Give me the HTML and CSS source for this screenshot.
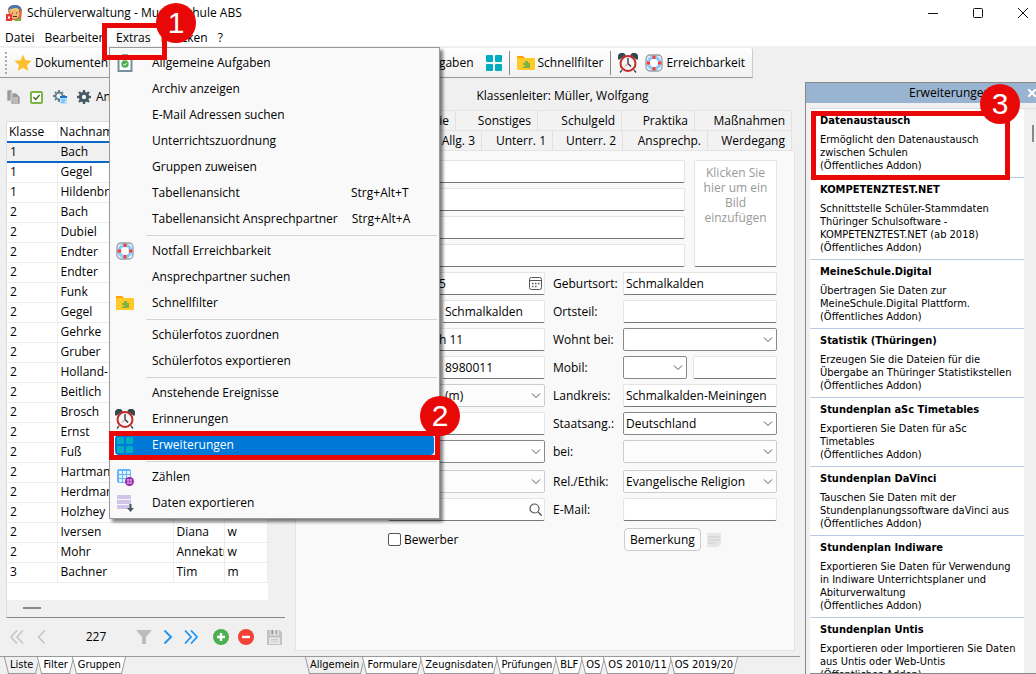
FILE: index.html
```html
<!DOCTYPE html>
<html lang="de">
<head>
<meta charset="utf-8">
<title>Schülerverwaltung</title>
<link rel="stylesheet" href="styles.css">
</head>
<body>
<svg class="defs" aria-hidden="true">
  <symbol id="i-star" viewBox="0 0 18 18"><path d="M9 .5l2.500 5.700 6.200.6-4.700 4.100 1.400 6.100L9 13.800 3.600 17 5 10.900.3 6.800l6.200-.6z" fill="#fcbf2e"/></symbol>
  <symbol id="i-grid" viewBox="0 0 16 16"><g fill="#00acc1"><rect width="7" height="7" rx="1"/><rect x="9" width="7" height="7" rx="1"/><rect y="9" width="7" height="7" rx="1"/><rect x="9" y="9" width="7" height="7" rx="1"/></g></symbol>
  <symbol id="i-folder" viewBox="0 0 18 14"><path d="M0 1q0-1 1-1h5l2 2h9v4H0z" fill="#ffa000"/><rect y="2" width="18" height="12" rx="1" fill="#ffca28"/><path d="M6 7h2V5h3v2h2v5H6v-1.500h2V9H6z" fill="#7cb342"/></symbol>
  <symbol id="i-clock" viewBox="0 0 20 20"><path d="M1 6a3.500 3.500 0 0 1 6-4zM19 6a3.500 3.500 0 0 0-6-4zM4 17l-2 2.500M16 17l2 2.500" fill="#37474f" stroke="#37474f" stroke-width="1.300"/><circle cx="10" cy="10.500" r="7.500" fill="#f5f5f5" stroke="#c62828" stroke-width="2"/><path d="M10 5v5.500l3 3" fill="none" stroke="#263238" stroke-width="1.300"/><path d="M10 10.500l-3 3" stroke="#ef5350"/></symbol>
  <symbol id="i-buoy" viewBox="0 0 18 18"><rect x="1" y="1" width="16" height="16" rx="4" fill="#f4f6f7" stroke="#8fa3ae" stroke-width="1.300"/><circle cx="9" cy="9" r="5.700" fill="#fff" stroke="#90caf9" stroke-width="3.600"/><path d="M9 1.500v3.500M9 13v3.500M1.500 9H5M13 9h3.500" stroke="#f44336" stroke-width="3"/></symbol>
  <symbol id="i-task" viewBox="0 0 16 18"><rect x="1.500" y="2.500" width="13" height="14.500" fill="#fff" stroke="#78909c" stroke-width="2"/><rect x="5" y="0" width="6" height="4" fill="#90a4ae"/><circle cx="8" cy="10" r="3.700" fill="#4caf50"/><path d="M6.300 10l1.300 1.300 2.300-2.500" fill="none" stroke="#fff"/></symbol>
  <symbol id="i-count" viewBox="0 0 17 17"><rect width="14" height="14" rx="2" fill="#64b5f6"/><path d="M2 2h3v3H2zM6 2h3v3H6zM10 2h3v3h-3zM2 6h3v3H2zM6 6h3v3H6zM10 6h3v3h-3zM2 10h3v3H2zM6 10h3v3H6z" fill="#e3f2fd"/><circle cx="12.500" cy="12.500" r="4.500" fill="#9c27b0"/><path d="M11 10v5M14 10v5M10 11h5M10 14h5" stroke="#e1bee7" stroke-width=".8"/></symbol>
  <symbol id="i-export" viewBox="0 0 17 17"><path d="M0 0h14v4H0zM0 5h14v4H0zM0 10h14v4H0z" fill="#d1c4e9"/><path d="M14.500 9v4H17l-3.500 4-3.500-4h2.500V9z" fill="#455a64"/></symbol>
  <symbol id="i-copy" viewBox="0 0 14 14"><path d="M1 0h5v11H1zM5 3h5l4 4v7H5z" fill="#9a9a9a" stroke="#f0f0f0" stroke-width=".6"/><path d="M7 8h5M7 10h5M7 12h5" stroke="#ddd"/></symbol>
  <symbol id="i-check" viewBox="0 0 13 13"><rect x="1" y="1" width="11" height="11" rx="1" fill="#fff" stroke="#7cb342" stroke-width="2"/><path d="M3.500 6l2.300 2.500L9.500 4" fill="none" stroke="#33691e" stroke-width="1.400"/></symbol>
  <symbol id="i-gear" viewBox="0 0 14 14"><circle cx="7" cy="7" r="3.700" fill="none" stroke="#455a64" stroke-width="3"/><path d="M7 0v2.500M7 11.500V14M0 7h2.500M11.500 7H14M2 2l2 2M10 10l2 2M12 2l-2 2M4 10l-2 2" stroke="#455a64" stroke-width="2.400"/></symbol>
  <symbol id="i-gearlist" viewBox="0 0 14 14"><circle cx="6" cy="6" r="3.500" fill="none" stroke="#607d8b" stroke-width="1.800"/><path d="M6 0v2M6 10v2M0 6h2M10 6h2M2 2l1 1M2 10l1-1M10 2L9 3" stroke="#607d8b" stroke-width="1.800"/><rect x="7" y="6" width="7" height="8" fill="#bbdefb"/><path d="M7 7h7" stroke="#1976d2" stroke-width="2"/><path d="M8.500 10h4M8.500 12h3" stroke="#42a5f5"/></symbol>
</svg>
<div class="app">
  <header class="titlebar">
    <svg class="logo" viewBox="0 0 16 16"><path d="M2 5q0-5 7-5 6 0 7 5l-1 10H4z" fill="#d9633a"/><circle cx="8.500" cy="9" r="5" fill="#f3b37a"/><path d="M2 6q1-6 7-6t6 6l-6-2z" fill="#3d7ac0"/><path d="M3 5.500l7-2 3 2" fill="none" stroke="#ffd54f" stroke-width="1.600"/><path d="M6 8h1M10 8h1M7 11.500h4" stroke="#5d2f1a"/><path d="M9 15q3-3 6-1v2H8z" fill="#7cb342"/><rect y="9" width="6" height="7" fill="#e53935"/><path d="M3 11v3M2 12.500h2" stroke="#fff"/></svg>
    <h1>Schülerverwaltung - Musterschule ABS</h1>
    <div class="winbtns">
      <button aria-label="Minimieren"><svg viewBox="0 0 10 10"><path d="M0 5.500h10" stroke="#111"/></svg></button>
      <button aria-label="Maximieren"><svg viewBox="0 0 10 10"><rect x=".5" y=".5" width="9" height="9" rx="1" fill="none" stroke="#111"/></svg></button>
      <button aria-label="Schließen"><svg viewBox="0 0 10 10"><path d="M0 0l10 10M10 0L0 10" stroke="#111"/></svg></button>
    </div>
  </header>
  <nav class="menubar">
    <button>Datei</button><button>Bearbeiten</button><button class="open">Extras</button><button>Drucken</button><button>?</button>
  </nav>

  <div class="work">
    <div class="toolbar">
      <span class="grip"></span>
      <button><svg class="s18"><use href="#i-star"/></svg>Dokumentenbox</button>
      <button class="push">Aufgaben</button>
      <button aria-label="Erweiterungen"><svg class="s16"><use href="#i-grid"/></svg></button>
      <span class="tsep"></span>
      <button><svg class="folder"><use href="#i-folder"/></svg>Schnellfilter</button>
      <span class="tsep"></span>
      <button aria-label="Erinnerungen"><svg class="s20"><use href="#i-clock"/></svg></button>
      <button><svg class="s18"><use href="#i-buoy"/></svg>Erreichbarkeit</button>
    </div>
    <div class="columns">
      <section class="left">
        <div class="listtools">
          <button aria-label="Kopieren"><svg class="s14"><use href="#i-copy"/></svg></button>
          <button aria-label="Auswählen"><svg class="s13"><use href="#i-check"/></svg></button>
          <button aria-label="Liste einstellen"><svg class="s14"><use href="#i-gearlist"/></svg></button>
          <button><svg class="s14"><use href="#i-gear"/></svg>Ansicht</button>
        </div>
        <div class="listbox">
          <table>
            <colgroup><col class="c1"><col class="c2"><col class="c3"><col class="c4"></colgroup>
            <thead><tr><th>Klasse</th><th>Nachname</th><th></th><th></th></tr></thead>
            <tbody>
              <tr class="sel"><td>1</td><td>Bach</td><td></td><td></td></tr>
              <tr><td>1</td><td>Gegel</td><td></td><td></td></tr>
              <tr><td>1</td><td>Hildenbrand</td><td></td><td></td></tr>
              <tr><td>2</td><td>Bach</td><td></td><td></td></tr>
              <tr><td>2</td><td>Dubiel</td><td></td><td></td></tr>
              <tr><td>2</td><td>Endter</td><td></td><td></td></tr>
              <tr><td>2</td><td>Endter</td><td></td><td></td></tr>
              <tr><td>2</td><td>Funk</td><td></td><td></td></tr>
              <tr><td>2</td><td>Gegel</td><td></td><td></td></tr>
              <tr><td>2</td><td>Gehrke</td><td></td><td></td></tr>
              <tr><td>2</td><td>Gruber</td><td></td><td></td></tr>
              <tr><td>2</td><td>Holland-</td><td></td><td></td></tr>
              <tr><td>2</td><td>Beitlich</td><td></td><td></td></tr>
              <tr><td>2</td><td>Brosch</td><td></td><td></td></tr>
              <tr><td>2</td><td>Ernst</td><td></td><td></td></tr>
              <tr><td>2</td><td>Fuß</td><td></td><td></td></tr>
              <tr><td>2</td><td>Hartmann</td><td></td><td></td></tr>
              <tr><td>2</td><td>Herdmann</td><td></td><td></td></tr>
              <tr><td>2</td><td>Holzhey</td><td></td><td></td></tr>
              <tr><td>2</td><td>Iversen</td><td>Diana</td><td>w</td></tr>
              <tr><td>2</td><td>Mohr</td><td>Annekatrin</td><td>w</td></tr>
              <tr><td>3</td><td>Bachner</td><td>Tim</td><td>m</td></tr>
            </tbody>
          </table>
          <div class="hscroll"><span></span></div>
        </div>
        <div class="pager">
          <button aria-label="Anfang"><svg class="s14" viewBox="0 0 14 14"><path d="M7 .5L1 7l6 6.500M13 .5L7 7l6 6.500" fill="none" stroke="#c4c4c4" stroke-width="1.500"/></svg></button>
          <button aria-label="Zurück"><svg class="s14" viewBox="0 0 14 14"><path d="M11.500.5L5.500 7l6 6.500" fill="none" stroke="#c4c4c4" stroke-width="1.500"/></svg></button>
          <span class="count">227</span>
          <button aria-label="Filter"><svg class="s16" viewBox="0 0 16 16"><path d="M0 1h16L10 8v7H6V8z" fill="#bdbdbd"/></svg></button>
          <button aria-label="Weiter"><svg class="s14" viewBox="0 0 14 14"><path d="M3.500.5L10 7l-6.500 6.500" fill="none" stroke="#2196f3" stroke-width="2"/></svg></button>
          <button aria-label="Ende"><svg class="s14" viewBox="0 0 14 14"><path d="M1 .5L7 7l-6 6.500M7 .5L13 7l-6 6.500" fill="none" stroke="#2196f3" stroke-width="1.800"/></svg></button>
          <button aria-label="Hinzufügen" class="add"><svg class="s16" viewBox="0 0 16 16"><circle cx="8" cy="8" r="8" fill="#4caf50"/><path d="M8 4v8M4 8h8" stroke="#fff" stroke-width="2.400"/></svg></button>
          <button aria-label="Löschen"><svg class="s16" viewBox="0 0 16 16"><circle cx="8" cy="8" r="8" fill="#f44336"/><path d="M4 8h8" stroke="#fff" stroke-width="2.400"/></svg></button>
          <button aria-label="Speichern" class="save"><svg class="s14" viewBox="0 0 14 14"><path d="M0 0h12l2 2v12H0z" fill="#c2c2c2"/><path d="M3 0h8v5H3zM2 7h10v6H2z" fill="#e8e8e8"/><path d="M4 0h2v4H4zM8 0h1.500v4H8z" fill="#999"/><path d="M3.500 9h7M3.500 11h7" stroke="#ccc"/></svg></button>
        </div>
        <div class="btabs"><button class="on">Liste</button><button>Filter</button><button>Gruppen</button></div>
      </section>

      <section class="center">
        <p class="leader">Klassenleiter: Müller, Wolfgang</p>
        <div class="tabs row1"><button>Familie</button><button>Sonstiges</button><button>Schulgeld</button><button>Praktika</button><button>Maßnahmen</button></div>
        <div class="tabs row2"><button>Allg. 3</button><button>Unterr. 1</button><button>Unterr. 2</button><button>Ansprechp.</button><button>Werdegang</button></div>
        <form class="panel">
          <div class="top">
            <div class="stack">
              <input aria-label="Name"><input aria-label="Vorname"><input aria-label="Rufname"><input aria-label="Geburtsname">
            </div>
            <button type="button" class="photo">Klicken Sie hier um ein Bild einzufügen</button>
          </div>
          <div class="fields">
            <div class="withicon"><input class="inset" aria-label="Geburtsdatum" value="5"><svg class="s13" viewBox="0 0 13 13"><rect x=".5" y=".5" width="12" height="12" rx="2" fill="none" stroke="#555"/><path d="M.5 3.500h12" stroke="#555"/><path d="M3 6.500h1.500M6 6.500h1.500M9 6.500h1.500M3 9.500h1.500M6 9.500h1.500" stroke="#555" stroke-width="1.300"/></svg></div>
            <label for="f1">Geburtsort:</label><input id="f1" value="Schmalkalden">

            <div class="pair"><input aria-label="PLZ"><input aria-label="Ort" value="Schmalkalden"></div>
            <label for="f2">Ortsteil:</label><input id="f2">

            <input class="inset" aria-label="Straße" value="h 11">
            <label for="f3">Wohnt bei:</label><select id="f3"><option></option></select>

            <div class="pair"><input aria-label="Vorwahl"><input aria-label="Telefon" value="8980011"></div>
            <label for="f4">Mobil:</label><div class="mobil"><select id="f4"><option></option></select><input aria-label="Mobilnummer"></div>

            <select class="soft sex" aria-label="Geschlecht"><option>(m)</option></select>
            <label for="f5">Landkreis:</label><input id="f5" value="Schmalkalden-Meiningen">

            <input aria-label="Zusatz">
            <label for="f6">Staatsang.:</label><select id="f6"><option>Deutschland</option></select>

            <select aria-label="Wohnhaft"><option></option></select>
            <label for="f7">bei:</label><select id="f7" class="soft"><option></option></select>

            <select class="soft gap" aria-label="Status"><option></option></select>
            <label class="gap" for="f8">Rel./Ethik:</label><select id="f8" class="soft gap"><option>Evangelische Religion</option></select>

            <div class="withicon"><input aria-label="Suche"><svg class="s13" viewBox="0 0 13 13"><circle cx="5.500" cy="5.500" r="4.500" fill="none" stroke="#555" stroke-width="1.200"/><path d="M9 9l3.800 3.800" stroke="#555" stroke-width="1.300"/></svg></div>
            <label for="f9">E-Mail:</label><input id="f9">

            <label class="bew"><input type="checkbox">Bewerber</label>
            <div class="note"><button type="button">Bemerkung</button><svg class="s14" viewBox="0 0 14 14"><path d="M0 0h14v11l-3 3H0z" fill="#e6e6e6"/><path d="M1 4h12M1 7h12M1 10h7" stroke="#cfcfcf"/></svg></div>
          </div>
        </form>
        <div class="btabs"><button class="on">Allgemein</button><button>Formulare</button><button>Zeugnisdaten</button><button>Prüfungen</button><button>BLF</button><button>OS</button><button>OS 2010/11</button><button>OS 2019/20</button></div>
      </section>

      <aside class="ext">
        <div class="exthead"><h2>Erweiterungen</h2><button aria-label="Panel schließen"><svg viewBox="0 0 8 8"><path d="M0 0l8 8M8 0L0 8" stroke="#fff" stroke-width="2"/></svg></button></div>
        <div class="extbody">
          <ul>
            <li><h3>Datenaustausch</h3><p>Ermöglicht den Datenaustausch<br>zwischen Schulen<br>(Öffentliches Addon)</p></li>
            <li><h3>KOMPETENZTEST.NET</h3><p>Schnittstelle Schüler-Stammdaten<br>Thüringer Schulsoftware -<br>KOMPETENZTEST.NET (ab 2018)<br>(Öffentliches Addon)</p></li>
            <li><h3>MeineSchule.Digital</h3><p>Übertragen Sie Daten zur<br>MeineSchule.Digital Plattform.<br>(Öffentliches Addon)</p></li>
            <li><h3>Statistik (Thüringen)</h3><p>Erzeugen Sie die Dateien für die<br>Übergabe an Thüringer Statistikstellen<br>(Öffentliches Addon)</p></li>
            <li><h3>Stundenplan aSc Timetables</h3><p>Exportieren Sie Daten für aSc<br>Timetables<br>(Öffentliches Addon)</p></li>
            <li><h3>Stundenplan DaVinci</h3><p>Tauschen Sie Daten mit der<br>Stundenplanungssoftware daVinci aus<br>(Öffentliches Addon)</p></li>
            <li><h3>Stundenplan Indiware</h3><p>Exportieren Sie Daten für Verwendung<br>in Indiware Unterrichtsplaner und<br>Abiturverwaltung<br>(Öffentliches Addon)</p></li>
            <li><h3>Stundenplan Untis</h3><p>Exportieren oder Importieren Sie Daten<br>aus Untis oder Web-Untis<br>(Öffentliches Addon)</p></li>
          </ul>
          <div class="vscroll"><span></span></div>
        </div>
      </aside>
    </div>
  </div>

  <div class="menu" role="menu">
    <button><svg class="task"><use href="#i-task"/></svg><span>Allgemeine Aufgaben</span></button>
    <button><span>Archiv anzeigen</span></button>
    <button><span>E-Mail Adressen suchen</span></button>
    <button><span>Unterrichtszuordnung</span></button>
    <button><span>Gruppen zuweisen</span></button>
    <button><span>Tabellenansicht</span><kbd>Strg+Alt+T</kbd></button>
    <button><span>Tabellenansicht Ansprechpartner</span><kbd>Strg+Alt+A</kbd></button>
    <hr>
    <button><svg class="s18"><use href="#i-buoy"/></svg><span>Notfall Erreichbarkeit</span></button>
    <button><span>Ansprechpartner suchen</span></button>
    <button><svg class="folder"><use href="#i-folder"/></svg><span>Schnellfilter</span></button>
    <hr>
    <button><span>Schülerfotos zuordnen</span></button>
    <button><span>Schülerfotos exportieren</span></button>
    <hr>
    <button><span>Anstehende Ereignisse</span></button>
    <button><svg class="s20"><use href="#i-clock"/></svg><span>Erinnerungen</span></button>
    <button class="active"><svg class="s16"><use href="#i-grid"/></svg><span>Erweiterungen</span></button>
    <hr>
    <button><svg class="s17"><use href="#i-count"/></svg><span>Zählen</span></button>
    <button><svg class="s17"><use href="#i-export"/></svg><span>Daten exportieren</span></button>
  </div>

  <div class="frame f-extras"></div><div class="badge b-extras">1</div>
  <div class="frame f-item"></div><div class="badge b-item">2</div>
  <div class="frame f-addon"></div><div class="badge b-addon">3</div>
</div>
</body>
</html>
```
FILE: styles.css
```css
* { box-sizing: border-box; }
body { margin: 0; background: #f0f0f0; color: #000; font: 12px/16px "Open Sans", "Noto Sans", sans-serif; }
button, input, select, kbd { font: inherit; color: inherit; margin: 0; padding: 0; }
button { border: 0; background: none; text-align: left; white-space: nowrap; }
h1, h2, h3, p, ul { margin: 0; padding: 0; font: inherit; list-style: none; }
svg { display: block; flex: none; }
.defs { position: absolute; width: 0; height: 0; }
.s13 { width: 13px; height: 13px; }
.s14 { width: 14px; height: 14px; }
.s16 { width: 16px; height: 16px; }
.s17 { width: 17px; height: 17px; }
.s18 { width: 18px; height: 18px; }
.s20 { width: 20px; height: 20px; }
.folder { width: 18px; height: 14px; }
.task { width: 16px; height: 18px; }

.app { position: relative; height: 100vh; display: flex; flex-direction: column; overflow: hidden; }
.titlebar { background: #fff; height: 26px; display: flex; align-items: center; gap: 5px; padding-left: 6px; flex: none; }
.logo { width: 16px; height: 16px; }
.winbtns { margin-left: auto; display: flex; gap: 35px; padding-right: 8px; }
.winbtns svg { width: 10px; height: 10px; }
.menubar { background: #fff; height: 20px; display: flex; align-items: flex-end; flex: none; padding-left: 5px; gap: 10px; }
.menubar .open { background: #f4f4f4; }
.menubar button { height: 17px; }

.work { flex: 1; min-height: 0; display: flex; flex-direction: column; padding-top: 2px; }
.toolbar { align-self: flex-start; min-width: 753px; height: 30px; display: flex; align-items: center; padding: 0 7px 0 5px; gap: 7px; background: linear-gradient(#fff, #f1f1f1); border-bottom: 1px solid #999; border-right: 1px solid #ccc; flex: none; border-radius: 0 2px 0 0; }
.toolbar button { display: flex; align-items: center; gap: 3px; }
.toolbar .push { margin-left: auto; padding-right: 5px; }
.grip { width: 2px; height: 22px; background: repeating-linear-gradient(#aaa 0 2px, transparent 2px 4px); }
.tsep { width: 1px; height: 24px; background: #888; }

.columns { flex: 1; min-height: 0; display: flex; }
.left { width: 290px; flex: none; display: flex; flex-direction: column; }
.listtools { height: 43px; flex: none; display: flex; align-items: flex-start; gap: 10px; padding: 11px 0 0 6px; }
.listtools button { display: flex; align-items: center; gap: 5px; height: 16px; }
.listbox { margin: 0 5px 0 6px; border-left: 1px solid #ddd; border-top: 1px solid #ddd; border-bottom: 1px solid #888; flex: 1; min-height: 0; display: flex; flex-direction: column; padding-right: 17px; background: linear-gradient(#f0f0f0, #f0f0f0) bottom / 100% 17px no-repeat, linear-gradient(#f0f0f0, #f0f0f0) right / 17px 100% no-repeat, #fff; }
table { width: 100%; table-layout: fixed; border-collapse: collapse; background: #fff; }
.c1 { width: 50px; } .c2 { width: 116px; } .c3 { width: 51px; }
th, td { height: 20px; padding: 0 0 0 3px; text-align: left; font-weight: 400; overflow: hidden; white-space: nowrap; border-bottom: 1px solid #ececec; border-right: 1px solid #ececec; }
th { padding-left: 2px; }
.sel td { background: #f0f0f0; border-top: 2px solid #0a66c8; border-bottom: 2px solid #0a66c8; }
.hscroll { margin-top: auto; height: 17px; padding: 7px 0 0 16px; }
.hscroll span { display: block; width: 18px; height: 2px; background: #888; }
.pager { height: 38px; flex: none; display: flex; align-items: center; padding-left: 10px; gap: 9px; }
.count { width: 80px; text-align: center; }
.pager .count { margin-right: -9px; }
.pager .add { margin-left: 6px; }
.pager .save { margin-left: 4px; }
.pager .save svg { width: 15px; height: 15px; }

.btabs { height: 18px; flex: none; border-top: 1px solid #999; display: flex; font: 11px/16px "DejaVu Sans Condensed", "DejaVu Sans", sans-serif; padding-left: 5px; }
.center .btabs { padding-left: 16px; }
.btabs button { position: relative; z-index: 0; height: 16px; padding: 0 4px; }
.btabs button::before, .btabs button::after { content: ""; position: absolute; z-index: -1; top: 0; height: 16px; width: 50%; background: #fff; border-bottom: 1px solid #999; }
.btabs button::before { left: 1px; border-left: 1px solid #999; transform: skewX(14deg); }
.btabs button::after { right: 1px; border-right: 1px solid #999; transform: skewX(-14deg); }
.btabs .on::before, .btabs .on::after { background: #f0f0f0; }
.left .btabs button { padding: 0 5px; }

.center { flex: 1; min-width: 0; margin-right: 5px; display: flex; flex-direction: column; }
.leader { height: 32px; padding-top: 10px; text-align: center; padding-left: 35px; }
.tabs { display: grid; margin: 0 8px 0 5px; }
.row1 { grid-template-columns: 1fr 82px 84px 73px 97px; }
.row2 { grid-template-columns: 1fr 71px 70px 85px 84px; }
.tabs button { height: 20px; text-align: right; padding-right: 6px; border-right: 1px solid #e2e2e2; border-top: 1px solid #e4e4e4; background: #f2f2f2; }
.panel { flex: 1; min-height: 0; margin: 0 5px 5px; background: #f9f9f9; border: 1px solid #e4e4e4; padding: 9px 17px 0 92px; }
.top { display: flex; gap: 9px; margin-bottom: 5px; }
.stack { flex: 1; display: grid; gap: 5px; }
.panel input:not([type]), .panel select { width: 100%; min-width: 0; height: 23px; background: #fff; border: 1px solid #e4e4e4; border-bottom-color: #777; border-radius: 2px; padding: 0 2px; outline: 0; }
.panel select { appearance: none; border-color: #888; background: #fff url("data:image/svg+xml,%3Csvg xmlns='http://www.w3.org/2000/svg' width='10' height='6'%3E%3Cpath d='M1 .5l4 4 4-4' fill='none' stroke='%23555'/%3E%3C/svg%3E") no-repeat right 3px center; }
.panel select.soft { border-color: #ccc; background-color: #fcfcfc; }
.photo { width: 83px; background: #fff; border: 1px solid #e4e4e4; border-bottom-color: #777; border-radius: 2px; white-space: normal; text-align: center; color: #999; line-height: 15px; display: flex; padding: 4px 8px; }
.fields { display: grid; grid-template-columns: minmax(0, 1fr) 78px 154px; row-gap: 5px; align-items: center; }
.fields > label { padding-left: 8px; }
.withicon { position: relative; }
.withicon svg { position: absolute; right: 3px; top: 5px; }
.pair { display: grid; grid-template-columns: 48px minmax(0, 1fr); gap: 6px; }
.mobil { display: grid; grid-template-columns: 64px minmax(0, 1fr); gap: 6px; }
.panel input.inset { padding-left: 50px; }
.panel select.sex { padding-left: 56px; }
.gap { margin-top: 2px; }
.fields > .bew { padding: 2px 0 0; grid-column: 1 / 3; display: flex; align-items: center; gap: 3px; }
.bew input { appearance: none; width: 13px; height: 13px; border: 1px solid #555; border-radius: 2px; background: #fff; }
.note { display: flex; align-items: center; gap: 6px; padding: 2px 0 0 1px; }
.note button { height: 23px; padding: 0 5px; border: 1px solid #ccc; border-radius: 4px; background: #fdfdfd; }

.ext { width: 231px; flex: none; margin-top: 4px; border-left: 1px solid #888; border-top: 1px solid #888; display: flex; flex-direction: column; }
.exthead { height: 20px; flex: none; background: #99b4d1; display: flex; align-items: center; }
.exthead h2 { flex: 1; text-align: center; padding-left: 66px; }
.exthead svg { width: 8px; height: 8px; }
.extbody { flex: 1; min-height: 0; display: flex; margin: 5px 0 0 4px; border-top: 1px solid #ddd; border-bottom: 1px solid #888; font: 11px/13px "DejaVu Sans Condensed", "DejaVu Sans", sans-serif; }
.extbody ul { flex: 1; background: #fff; overflow: hidden; }
.extbody li { padding: 4px 2px 5px 10px; border-bottom: 1px solid #b5cce4; white-space: nowrap; }
.extbody h3 { font-weight: 700; line-height: 16px; margin-bottom: 4px; }
.vscroll { width: 12px; padding: 16px 0 0 8px; }
.vscroll span { display: block; width: 2px; height: 17px; background: #888; }

.menu { position: absolute; left: 109px; top: 47px; width: 331px; background: #f9f9f9; border: 1px solid #999; padding: 2px; display: flex; flex-direction: column; box-shadow: 3px 3px 3px rgba(0, 0, 0, .5); }
.menu button { height: 26px; display: grid; grid-template-columns: 26px 1fr 61px; column-gap: 14px; align-items: center; padding-right: 25px; }
.menu button svg { justify-self: center; }
.menu button span { grid-column: 2; grid-row: 1; }
.menu kbd { grid-column: 3; grid-row: 1; }
.menu hr { width: auto; align-self: stretch; height: 1px; margin: 3px 0 2px 34px; border: 0; background: #d4d4d4; }
.menu .active { height: 20px; margin: 3px; background: #0078d7; color: #fff; border-radius: 4px; grid-template-columns: 20px 1fr; column-gap: 17px; }

.frame { position: absolute; border: 5px solid #e90808; }
.badge { position: absolute; width: 40px; height: 40px; border-radius: 50%; background: #e90808; color: #fff; font: 30px/40px "Liberation Sans", sans-serif; text-align: center; }
.f-extras { left: 102px; top: 23px; width: 65px; height: 37px; }
.b-extras { left: 156px; top: 3px; }
.f-item { left: 109px; top: 431px; width: 331px; height: 29px; }
.b-item { left: 420px; top: 396px; }
.f-addon { right: 26px; top: 111px; width: 199px; height: 69px; }
.b-addon { right: 16px; top: 84px; }
```
